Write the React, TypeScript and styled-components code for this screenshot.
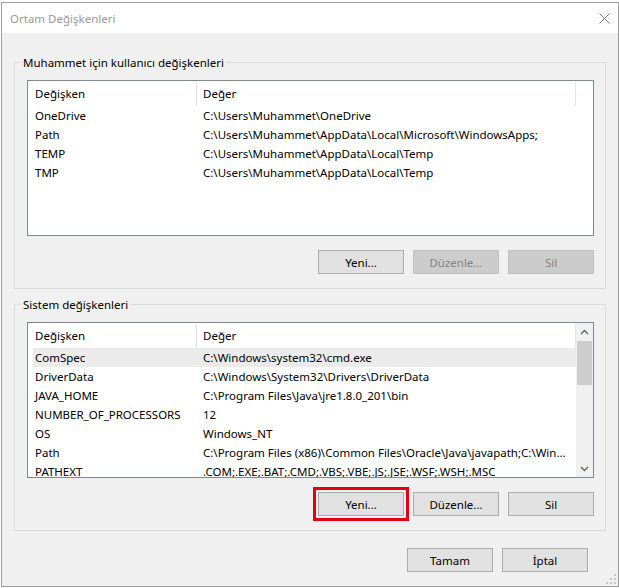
import React from 'react';
import styled, { createGlobalStyle } from 'styled-components';

type Variable = { name: string; value: string; selected?: boolean };

const USER_VARS: Variable[] = [
  { name: 'OneDrive', value: 'C:\\Users\\Muhammet\\OneDrive' },
  { name: 'Path', value: 'C:\\Users\\Muhammet\\AppData\\Local\\Microsoft\\WindowsApps;' },
  { name: 'TEMP', value: 'C:\\Users\\Muhammet\\AppData\\Local\\Temp' },
  { name: 'TMP', value: 'C:\\Users\\Muhammet\\AppData\\Local\\Temp' },
];

const SYSTEM_VARS: Variable[] = [
  { name: 'ComSpec', value: 'C:\\Windows\\system32\\cmd.exe', selected: true },
  { name: 'DriverData', value: 'C:\\Windows\\System32\\Drivers\\DriverData' },
  { name: 'JAVA_HOME', value: 'C:\\Program Files\\Java\\jre1.8.0_201\\bin' },
  { name: 'NUMBER_OF_PROCESSORS', value: '12' },
  { name: 'OS', value: 'Windows_NT' },
  { name: 'Path', value: 'C:\\Program Files (x86)\\Common Files\\Oracle\\Java\\javapath;C:\\Win...' },
  { name: 'PATHEXT', value: '.COM;.EXE;.BAT;.CMD;.VBS;.VBE;.JS;.JSE;.WSF;.WSH;.MSC' },
];

const GlobalStyle = createGlobalStyle`
  html, body {
    margin: 0;
    padding: 0;
    background: #ffffff;
  }
  body {
    font-family: 'Segoe UI', 'Noto Sans', sans-serif;
    font-size: 11.5px;
    color: #000;
  }
`;

const Chevron = ({ up }: { up?: boolean }) => (
  <svg width="9" height="6" viewBox="0 0 9 6">
    <polyline
      points={up ? '1,5 4.5,1.5 8,5' : '1,1 4.5,4.5 8,1'}
      fill="none"
      stroke="#606060"
      strokeWidth="1.4"
    />
  </svg>
);

const VarList = ({ items, scroll }: { items: Variable[]; scroll?: boolean }) => (
  <ListBox>
    <ListMain>
      <HeaderRow>
        <HeaderCell $width={169}>Değişken</HeaderCell>
        <HeaderCell $width={379}>Değer</HeaderCell>
      </HeaderRow>
      <Rows>
        {items.map(item => (
          <Row key={item.name} $selected={item.selected}>
            <NameCell>{item.name}</NameCell>
            <ValueCell>{item.value}</ValueCell>
          </Row>
        ))}
      </Rows>
    </ListMain>
    {scroll && (
      <ScrollBar>
        <ArrowBtn>
          <Chevron up />
        </ArrowBtn>
        <Track>
          <Thumb />
        </Track>
        <ArrowBtn>
          <Chevron />
        </ArrowBtn>
      </ScrollBar>
    )}
  </ListBox>
);

const App = () => {
  return (
    <>
      <GlobalStyle />
      <Window>
        <TitleBar>
          <Title>Ortam Değişkenleri</Title>
          <CloseBtn>
            <svg width="11" height="11" viewBox="0 0 11 11">
              <path d="M0.5 0.5 L10.5 10.5 M10.5 0.5 L0.5 10.5" stroke="#7a7a7a" strokeWidth="1" />
            </svg>
          </CloseBtn>
        </TitleBar>
        <Body>
          <Group>
            <Legend>Muhammet için kullanıcı değişkenleri</Legend>
            <VarList items={USER_VARS} />
            <ButtonRow>
              <Button>Yeni...</Button>
              <Button disabled>Düzenle...</Button>
              <Button disabled>Sil</Button>
            </ButtonRow>
          </Group>
          <Group $spaced>
            <Legend>Sistem değişkenleri</Legend>
            <VarList items={SYSTEM_VARS} scroll />
            <ButtonRow>
              <Button $highlighted>Yeni...</Button>
              <Button>Düzenle...</Button>
              <Button>Sil</Button>
            </ButtonRow>
          </Group>
          <Footer>
            <Button>Tamam</Button>
            <Button>İptal</Button>
          </Footer>
        </Body>
        <Grip>
          <svg width="10" height="10" viewBox="0 0 10 10">
            <rect x="8" y="0" width="2" height="2" fill="#c4c4c4" />
            <rect x="4" y="4" width="2" height="2" fill="#c4c4c4" />
            <rect x="8" y="4" width="2" height="2" fill="#c4c4c4" />
            <rect x="0" y="8" width="2" height="2" fill="#c4c4c4" />
            <rect x="4" y="8" width="2" height="2" fill="#c4c4c4" />
            <rect x="8" y="8" width="2" height="2" fill="#c4c4c4" />
          </svg>
        </Grip>
      </Window>
    </>
  );
};

const Window = styled.div`
  box-sizing: border-box;
  position: relative;
  width: 618px;
  height: 585px;
  margin: 2px 0 0 1px;
  border: 1px solid #9d9d9d;
  background-color: #f0f0f0;
  display: flex;
  flex-direction: column;
`;

const TitleBar = styled.div`
  height: 30px;
  flex-shrink: 0;
  background-color: #ffffff;
  display: flex;
  align-items: center;
  justify-content: space-between;
  padding-left: 8px;
`;

const Title = styled.div`
  color: #999999;
  font-size: 11.5px;
`;

const CloseBtn = styled.div`
  width: 28px;
  height: 30px;
  display: flex;
  align-items: center;
  justify-content: center;
`;

const Body = styled.div`
  flex: 1;
  display: flex;
  flex-direction: column;
  padding-top: 22px;
`;

const Group = styled.fieldset<{ $spaced?: boolean }>`
  margin: ${p => (p.$spaced ? '8px' : '0')} 12px 0 12px;
  padding: 0 11px 14px 12px;
  min-width: 0;
  border: 1px solid #dcdcdc;
`;

const Legend = styled.legend`
  padding: 0 2px;
  margin-left: -6px;
  height: 15px;
  line-height: 15px;
  font-size: 11.5px;
  color: #000;
`;

const ListBox = styled.div`
  box-sizing: border-box;
  margin-top: 10px;
  height: 156px;
  border: 1px solid #828790;
  background-color: #ffffff;
  display: flex;
  overflow: hidden;
`;

const ListMain = styled.div`
  width: 548px;
  display: flex;
  flex-direction: column;
`;

const HeaderRow = styled.div`
  display: flex;
  height: 25px;
  flex-shrink: 0;
`;

const HeaderCell = styled.div<{ $width: number }>`
  box-sizing: border-box;
  width: ${p => p.$width}px;
  padding-left: 6px;
  line-height: 23px;
  margin-top: 1px;
  border-right: 1px solid #e5e5e5;

  &:first-child {
    padding-left: 7px;
  }
`;

const Rows = styled.div`
  display: flex;
  flex-direction: column;
  padding-left: 5px;
`;

const Row = styled.div<{ $selected?: boolean }>`
  display: flex;
  height: 19px;
  line-height: 19px;
  flex-shrink: 0;
  background-color: ${p => (p.$selected ? '#ebebeb' : 'transparent')};
  white-space: nowrap;
`;

const NameCell = styled.div`
  box-sizing: border-box;
  width: 164px;
  padding-left: 2px;
  overflow: hidden;
`;

const ValueCell = styled.div`
  flex: 1;
  padding-left: 6px;
  overflow: hidden;
`;

const ScrollBar = styled.div`
  width: 17px;
  background-color: #f0f0f0;
  display: flex;
  flex-direction: column;
`;

const ArrowBtn = styled.div`
  height: 17px;
  flex-shrink: 0;
  display: flex;
  align-items: center;
  justify-content: center;
`;

const Track = styled.div`
  flex: 1;
  padding: 1px;
`;

const Thumb = styled.div`
  height: 44px;
  background-color: #cdcdcd;
`;

const ButtonRow = styled.div`
  display: flex;
  justify-content: flex-end;
  gap: 9px;
  margin-top: 14px;
`;

const Footer = styled.div`
  display: flex;
  justify-content: flex-end;
  gap: 9px;
  margin-top: 17px;
  padding-right: 30px;
`;

const Button = styled.button<{ $highlighted?: boolean }>`
  box-sizing: border-box;
  width: 86px;
  height: 24px;
  padding: 0;
  font-family: inherit;
  font-size: 11.5px;
  color: #000;
  background-color: #e1e1e1;
  border: 1px solid #adadad;
  border-radius: 0;
  outline: ${p => (p.$highlighted ? '3px solid #e3000f' : 'none')};
  outline-offset: 2px;

  &:disabled {
    color: #838383;
    background-color: #cccccc;
    border-color: #bfbfbf;
  }
`;

const Grip = styled.div`
  position: absolute;
  right: 2px;
  bottom: 2px;
  line-height: 0;
`;

export default App;
